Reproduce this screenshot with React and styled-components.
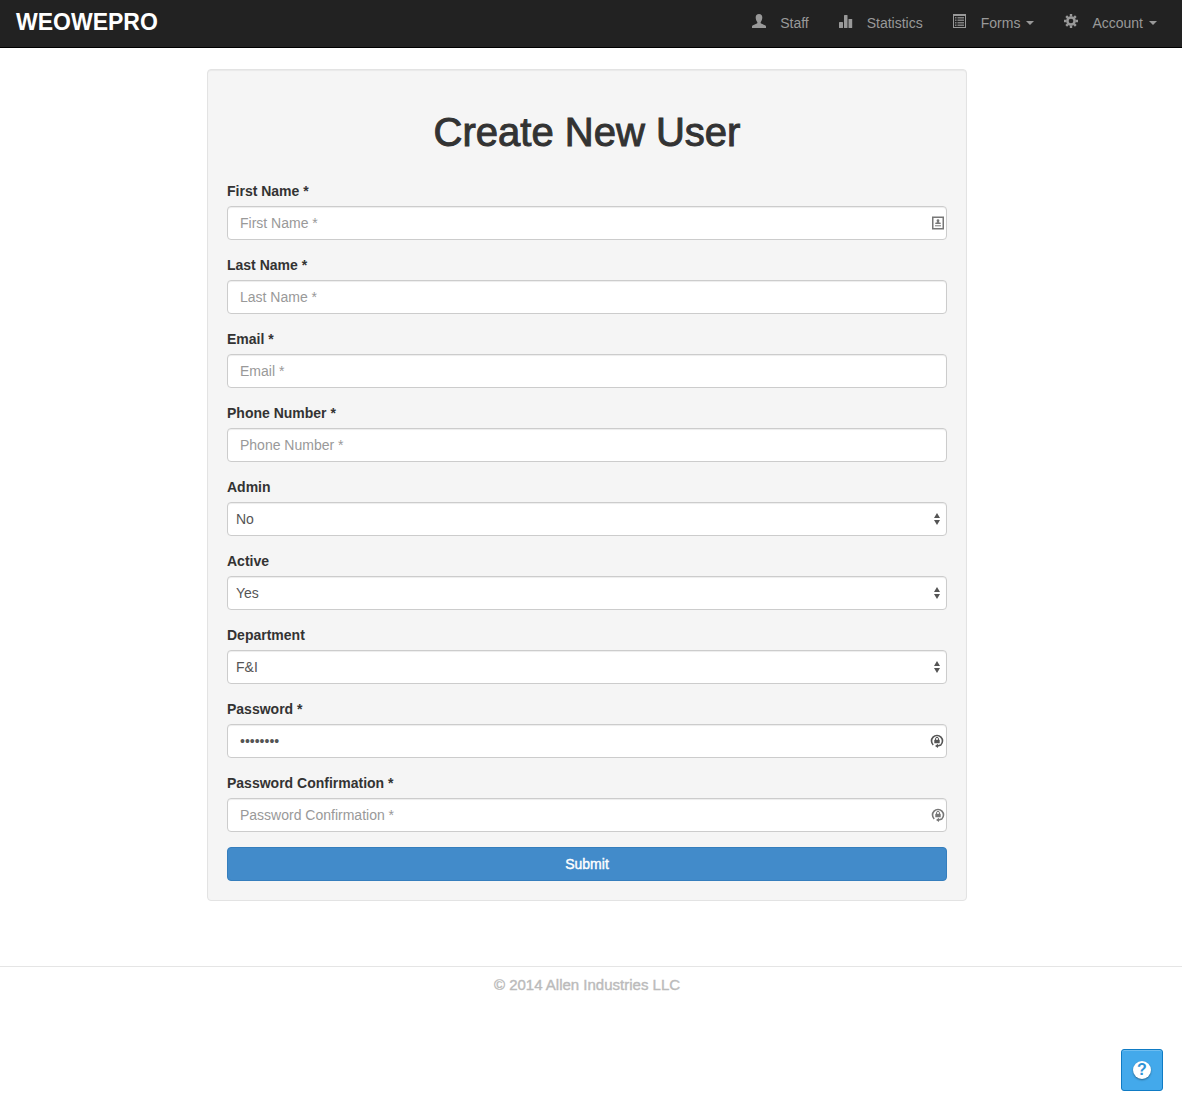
import React from "react";
import styled, { createGlobalStyle } from "styled-components";

const GlobalStyle = createGlobalStyle`
  *, *::before, *::after { box-sizing: border-box; }
  body {
    margin: 0;
    background: #fff;
    color: #333;
    font-family: "Liberation Sans", Arial, Helvetica, sans-serif;
    font-size: 14px;
    line-height: 20px;
  }
  input, select, button { font: inherit; }
`;

const Navbar = styled.header`
  display: flex;
  align-items: center;
  justify-content: space-between;
  height: 48px;
  padding: 0 10px 2px 16px;
  background: #222;
  border-bottom: 1px solid #000;
`;

const Brand = styled.a`
  color: #fff;
  font-size: 23px;
  font-weight: 700;
  line-height: 28px;
  padding-bottom: 2px;
  text-decoration: none;
`;

const NavList = styled.nav`
  display: flex;
`;

const NavLink = styled.a`
  display: flex;
  align-items: center;
  padding: 0 15px;
  color: #999;
  line-height: 20px;
  text-decoration: none;

  svg {
    margin: 0 14px 4px 0;
  }
`;

const Caret = styled.span`
  margin-left: 6px;
  border-top: 4px solid currentColor;
  border-left: 4px solid transparent;
  border-right: 4px solid transparent;
`;

const Main = styled.main`
  padding: 21px 8px 65px 0;
`;

const Card = styled.form`
  max-width: 760px;
  margin: 0 auto;
  padding: 19px;
  background: #f5f5f5;
  border: 1px solid #e3e3e3;
  border-radius: 4px;
  box-shadow: inset 0 1px 1px rgba(0, 0, 0, 0.05);
`;

const Title = styled.h1`
  margin: 20px 0 26px;
  font-size: 40px;
  font-weight: 400;
  line-height: 46px;
  text-align: center;
  -webkit-text-stroke: 1px #333;
`;

const Field = styled.div`
  display: flex;
  flex-direction: column;
  gap: 5px;
  margin-bottom: 15px;
`;

const Label = styled.label`
  font-weight: 700;
`;

const Control = styled.div`
  position: relative;
`;

const Input = styled.input`
  display: block;
  width: 100%;
  height: 34px;
  padding: 6px 12px;
  color: #555;
  background: #fff;
  border: 1px solid #ccc;
  border-radius: 4px;
  box-shadow: inset 0 1px 1px rgba(0, 0, 0, 0.075);

  &::placeholder { color: #999; opacity: 1; }
`;

const Select = styled(Input)`
  appearance: none;
  padding: 0 8px;
`;

const Adornment = styled.span`
  position: absolute;
  top: 0;
  right: ${(p) => p.$right}px;
  display: flex;
  align-items: center;
  height: 34px;
  pointer-events: none;
`;

const Submit = styled.button`
  display: block;
  width: 100%;
  height: 34px;
  color: #fff;
  background: #428bca;
  border: 1px solid #357ebd;
  border-radius: 4px;
  -webkit-text-stroke: 0.4px #fff;
`;

const Footer = styled.footer`
  padding: 8px 8px 0 0;
  border-top: 1px solid #e5e5e5;
  color: #bbb;
  font-size: 15px;
  text-align: center;
  -webkit-text-stroke: 0.4px #bbb;
`;

const HelpButton = styled.button`
  position: fixed;
  right: 19px;
  bottom: 11px;
  display: flex;
  align-items: center;
  justify-content: center;
  width: 42px;
  height: 42px;
  padding: 0;
  background: #43a9eb;
  border: 1px solid #0f7bc4;
  border-radius: 3px;
  box-shadow: inset 0 1px 0 #6dbdf0;
`;

const HelpMark = styled.span`
  width: 18px;
  height: 18px;
  border-radius: 50%;
  background: #fff;
  color: #2f94d6;
  font-size: 16px;
  font-weight: 700;
  line-height: 18px;
  text-align: center;
  box-shadow: 0 1px 2px rgba(0, 0, 0, 0.4);
`;

const UserIcon = () => (
  <svg width="14" height="14" viewBox="0 0 14 14" fill="currentColor" aria-hidden="true">
    <path d="M7 0C4.8 0 3.7 1.4 3.7 3.6c0 1.900.7 3.400 1.500 4.500.300.500.200 1.200-.300 1.500L1 11.300C.3 11.600 0 12 0 12.600V14h14v-1.400c0-.600-.300-1-1-1.300L9.100 9.600c-.500-.300-.600-1-.300-1.500.800-1.100 1.500-2.600 1.500-4.500C10.300 1.400 9.200 0 7 0z" />
  </svg>
);

const StatsIcon = () => (
  <svg width="14" height="14" viewBox="0 0 14 14" fill="currentColor" aria-hidden="true">
    <rect x="0" y="8" width="4" height="6" rx=".6" />
    <rect x="5" y="1" width="3.500" height="13" rx=".6" />
    <rect x="9.500" y="5" width="3.700" height="9" rx=".6" />
  </svg>
);

const ListIcon = () => (
  <svg width="14" height="14" viewBox="0 0 14 14" fill="currentColor" aria-hidden="true">
    <path fillRule="evenodd" d="M0 0h13v14H0zM1 2v11h11V2z" />
    <path d="M2 3h1.500v1.500H2zM4.500 3H11v1.500H4.500zM2 5.500h1.500V7H2zM4.500 5.500H11V7H4.500zM2 8h1.500v1.500H2zM4.500 8H11v1.500H4.500zM2 10.500h1.500V12H2zM4.500 10.500H11V12H4.500z" opacity=".8" />
  </svg>
);

const GearIcon = () => (
  <svg width="14" height="14" viewBox="0 0 14 14" fill="none" stroke="currentColor" aria-hidden="true">
    <circle cx="7" cy="7" r="3.600" strokeWidth="2.500" />
    <path d="M7 0v2.500M7 11.500V14M0 7h2.500M11.500 7H14M2.200 2.200L3.900 3.900M10.100 10.100l1.700 1.700M11.800 2.200l-1.700 1.700M3.900 10.100l-1.700 1.700" strokeWidth="2.400" />
  </svg>
);

const ContactIcon = () => (
  <svg width="12" height="14" viewBox="0 0 12 14" fill="#777" aria-hidden="true">
    <path fillRule="evenodd" d="M0 0.500h12v13H0zM1.500 2v10h9V2z" />
    <circle cx="6" cy="4.700" r="1.400" />
    <path d="M5.300 5h1.400v1.300l2 .500V8H3.300V6.800l2-.500z" />
    <path d="M3 9h6v1.400H3z" opacity=".7" />
  </svg>
);

const ArrowsIcon = () => (
  <svg width="6" height="12" viewBox="0 0 6 12" fill="#555" aria-hidden="true">
    <path d="M3 0l3 5H0zM3 12L0 7h6z" />
  </svg>
);

const LockIcon = ({ color }) => (
  <svg width="14" height="14" viewBox="0 0 14 14" fill="none" stroke={color} aria-hidden="true">
    <path d="M3.200 11A5.500 5.500 0 1 1 10.800 11L7.500 12" strokeWidth="1.600" />
    <path d="M8 9.800V14L5 12z" fill={color} stroke="none" />
    <path d="M5.500 6V4.900a1.500 1.500 0 0 1 3 0V6" strokeWidth="1" />
    <rect x="4.300" y="5.700" width="5.400" height="3.600" rx=".4" fill={color} stroke="none" />
  </svg>
);

const navItems = [
  { label: "Staff", Icon: UserIcon },
  { label: "Statistics", Icon: StatsIcon },
  { label: "Forms", Icon: ListIcon, menu: true },
  { label: "Account", Icon: GearIcon, menu: true },
];

const TextField = ({ id, label, icon, iconRight = 2, ...rest }) => (
  <Field>
    <Label htmlFor={id}>{label}</Label>
    <Control>
      <Input id={id} placeholder={label} {...rest} />
      {icon && <Adornment $right={iconRight}>{icon}</Adornment>}
    </Control>
  </Field>
);

const SelectField = ({ id, label, options }) => (
  <Field>
    <Label htmlFor={id}>{label}</Label>
    <Control>
      <Select as="select" id={id}>
        {options.map((o) => (
          <option key={o}>{o}</option>
        ))}
      </Select>
      <Adornment $right={7}>
        <ArrowsIcon />
      </Adornment>
    </Control>
  </Field>
);

export default function App() {
  return (
    <>
      <GlobalStyle />
      <Navbar>
        <Brand href="#">WEOWEPRO</Brand>
        <NavList>
          {navItems.map(({ label, Icon, menu }) => (
            <NavLink href="#" key={label}>
              <Icon />
              {label}
              {menu && <Caret />}
            </NavLink>
          ))}
        </NavList>
      </Navbar>
      <Main>
        <Card onSubmit={(e) => e.preventDefault()}>
          <Title>Create New User</Title>
          <TextField id="first" label="First Name *" icon={<ContactIcon />} iconRight={3} />
          <TextField id="last" label="Last Name *" />
          <TextField id="email" label="Email *" />
          <TextField id="phone" label="Phone Number *" />
          <SelectField id="admin" label="Admin" options={["No"]} />
          <SelectField id="active" label="Active" options={["Yes"]} />
          <SelectField id="department" label="Department" options={["F&I"]} />
          <TextField id="password" label="Password *" type="password" defaultValue="password" icon={<LockIcon color="#555" />} iconRight={3} />
          <TextField id="confirm" label="Password Confirmation *" type="password" icon={<LockIcon color="#777" />} />
          <Submit type="submit">Submit</Submit>
        </Card>
      </Main>
      <Footer>© 2014 Allen Industries LLC</Footer>
      <HelpButton type="button" aria-label="Help">
        <HelpMark>?</HelpMark>
      </HelpButton>
    </>
  );
}
